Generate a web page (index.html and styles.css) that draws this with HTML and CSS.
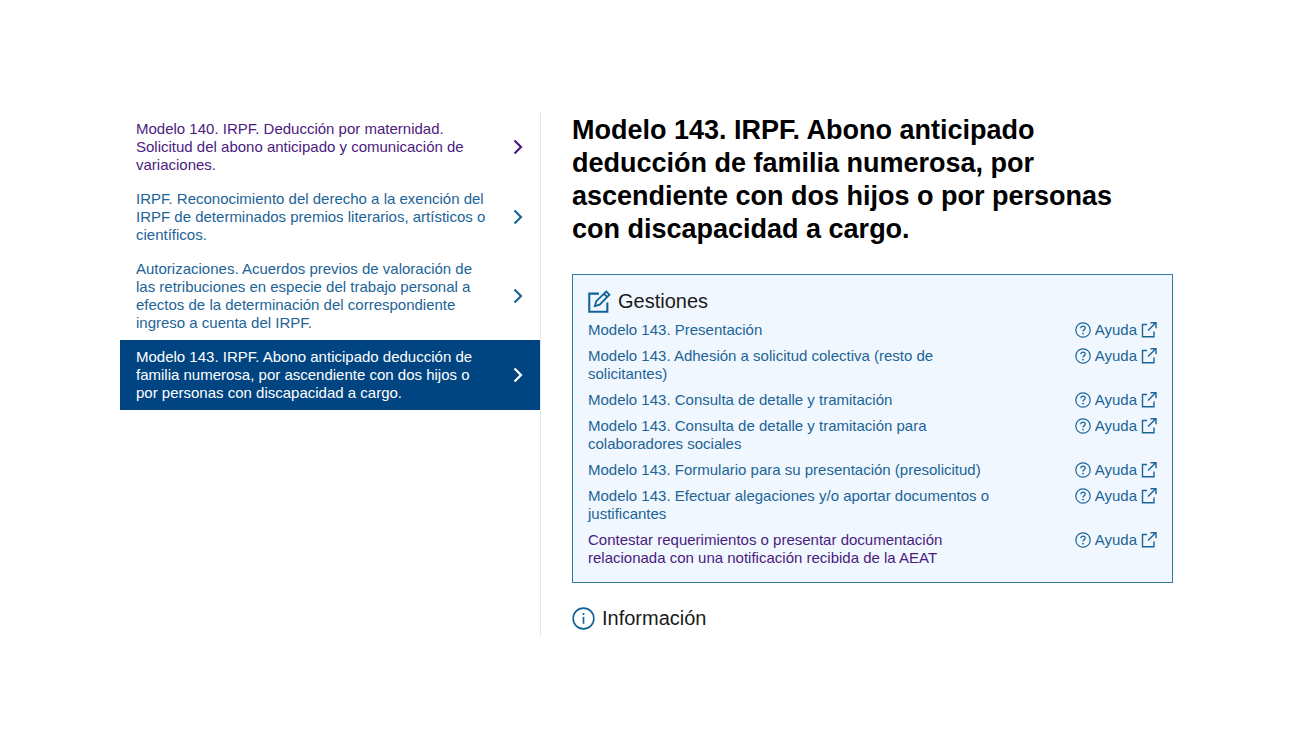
FILE: index.html
```html
<!DOCTYPE html>
<html lang="es">
<head>
    <meta charset="UTF-8">
    <meta name="viewport" content="width=device-width, initial-scale=1.0">
    <title>Modelo 143. IRPF</title>
    <link rel="stylesheet" href="styles.css">
</head>
<body>
    <!-- Shared icons -->
    <svg class="sprite" aria-hidden="true">
        <symbol id="chevron" viewBox="0 0 10 16">
            <path d="M1.500 1.500 8 8l-6.500 6.500" fill="none" stroke="currentColor" stroke-width="2.200"/>
        </symbol>
        <symbol id="help" viewBox="0 0 16 16">
            <circle cx="8" cy="8" r="7.200" fill="none" stroke="currentColor" stroke-width="1.200"/>
            <path d="M5.800 6.300C5.800 4.900 6.700 4.100 8 4.100s2.200.8 2.200 2c0 1.700-2.200 1.800-2.200 3.500" fill="none" stroke="currentColor" stroke-width="1.300"/>
            <circle cx="8" cy="11.600" r=".9" fill="currentColor"/>
        </symbol>
        <symbol id="external" viewBox="0 0 16 16">
            <path d="M6 2.500H1.500v12.300H13V9.500M7 8.500 14.500 1M9.500.8h5.500v5.500" fill="none" stroke="currentColor" stroke-width="1.400"/>
        </symbol>
        <symbol id="edit" viewBox="0 0 22 22">
            <path d="M10.500 3.500H1.200v17.300h17.300V12" fill="none" stroke="currentColor" stroke-width="2"/>
            <path d="M6.500 15.500l1.400-4.800L17.500 1.500l3 3-9.300 9.500zM15.300 3.600l3 3" fill="none" stroke="currentColor" stroke-width="1.700"/>
        </symbol>
        <symbol id="info" viewBox="0 0 24 24">
            <circle cx="12" cy="12" r="10.800" fill="none" stroke="currentColor" stroke-width="1.700"/>
            <path d="M12 10.300v7.200" stroke="currentColor" stroke-width="1.700"/>
            <circle cx="12" cy="7.300" r="1.100" fill="currentColor"/>
        </symbol>
    </svg>

    <div class="container">
        <nav class="sidebar">
            <a class="item visited" href="#">
                <span>Modelo 140. IRPF. Deducción por maternidad. Solicitud del abono anticipado y comunicación de variaciones.</span>
                <svg class="chevron"><use href="#chevron"/></svg>
            </a>
            <a class="item" href="#">
                <span>IRPF. Reconocimiento del derecho a la exención del IRPF de determinados premios literarios, artísticos o científicos.</span>
                <svg class="chevron"><use href="#chevron"/></svg>
            </a>
            <a class="item" href="#">
                <span>Autorizaciones. Acuerdos previos de valoración de las retribuciones en especie del trabajo personal a efectos de la determinación del correspondiente ingreso a cuenta del IRPF.</span>
                <svg class="chevron"><use href="#chevron"/></svg>
            </a>
            <a class="item active" href="#">
                <span>Modelo 143. IRPF. Abono anticipado deducción de familia numerosa, por ascendiente con dos hijos o por personas con discapacidad a cargo.</span>
                <svg class="chevron"><use href="#chevron"/></svg>
            </a>
        </nav>

        <main class="content">
            <h1>Modelo 143. IRPF. Abono anticipado deducción de familia numerosa, por ascendiente con dos hijos o por personas con discapacidad a cargo.</h1>

            <section class="panel">
                <h2><svg class="edit"><use href="#edit"/></svg>Gestiones</h2>
                <ul>
                    <li>
                        <a class="link" href="#">Modelo 143. Presentación</a>
                        <a class="help" href="#"><svg><use href="#help"/></svg>Ayuda<svg><use href="#external"/></svg></a>
                    </li>
                    <li>
                        <a class="link" href="#">Modelo 143. Adhesión a solicitud colectiva (resto de solicitantes)</a>
                        <a class="help" href="#"><svg><use href="#help"/></svg>Ayuda<svg><use href="#external"/></svg></a>
                    </li>
                    <li>
                        <a class="link" href="#">Modelo 143. Consulta de detalle y tramitación</a>
                        <a class="help" href="#"><svg><use href="#help"/></svg>Ayuda<svg><use href="#external"/></svg></a>
                    </li>
                    <li>
                        <a class="link" href="#">Modelo 143. Consulta de detalle y tramitación para colaboradores sociales</a>
                        <a class="help" href="#"><svg><use href="#help"/></svg>Ayuda<svg><use href="#external"/></svg></a>
                    </li>
                    <li>
                        <a class="link" href="#">Modelo 143. Formulario para su presentación (presolicitud)</a>
                        <a class="help" href="#"><svg><use href="#help"/></svg>Ayuda<svg><use href="#external"/></svg></a>
                    </li>
                    <li>
                        <a class="link" href="#">Modelo 143. Efectuar alegaciones y/o aportar documentos o justificantes</a>
                        <a class="help" href="#"><svg><use href="#help"/></svg>Ayuda<svg><use href="#external"/></svg></a>
                    </li>
                    <li>
                        <a class="link visited" href="#">Contestar requerimientos o presentar documentación relacionada con una notificación recibida de la AEAT</a>
                        <a class="help" href="#"><svg><use href="#help"/></svg>Ayuda<svg><use href="#external"/></svg></a>
                    </li>
                </ul>
            </section>

            <h2 class="info-title"><svg class="info"><use href="#info"/></svg>Información</h2>
        </main>
    </div>
</body>
</html>
```
FILE: styles.css
```css
* {
    box-sizing: border-box;
}
body {
    font-family: "Liberation Sans", Arial, sans-serif;
    font-size: 15px;
    line-height: 18px;
    margin: 0;
    background-color: #fff;
    color: #1a1a1a;
}
a {
    color: #1c6497;
    text-decoration: none;
}
a:hover {
    text-decoration: underline;
}
a.visited {
    color: #4b1b80;
}
svg {
    flex: none;
}
.sprite {
    position: absolute;
    width: 0;
    height: 0;
}
.container {
    display: flex;
    max-width: 1060px;
    margin: 0 auto;
    padding: 112px 7px 95px 0;
}
.sidebar {
    width: 421px;
    flex: none;
    border-right: 1px solid #e6e6e6;
}
.item {
    display: flex;
    align-items: center;
    justify-content: space-between;
    gap: 20px;
    padding: 8px 17px 8px 16px;
}
.item span {
    max-width: 358px;
}
.item.active {
    background-color: #004481;
    color: #fff;
}
.chevron {
    width: 10px;
    height: 16px;
}
.content {
    flex: 1;
    padding: 2px 0 6px 31px;
}
h1 {
    max-width: 570px;
    margin: 0 0 28px;
    font-size: 27px;
    line-height: 33px;
    color: #000;
}
h2 {
    display: flex;
    align-items: center;
    gap: 7px;
    margin: 0;
    font-size: 20px;
    line-height: 24px;
    font-weight: normal;
}
.panel {
    border: 1px solid #3578a0;
    background-color: #f0f7fe;
    padding: 14px 15px 15px;
}
.panel ul {
    list-style: none;
    display: flex;
    flex-direction: column;
    gap: 8px;
    margin: 8px 0 0;
    padding: 0;
}
.panel li {
    display: flex;
    align-items: flex-start;
    justify-content: space-between;
}
.link {
    max-width: 410px;
}
.help {
    display: flex;
    align-items: center;
    gap: 4px;
}
.help svg {
    width: 16px;
    height: 16px;
}
.edit,
.info {
    width: 23px;
    height: 23px;
    color: #126399;
}
.info-title {
    margin-top: 23px;
}
```
